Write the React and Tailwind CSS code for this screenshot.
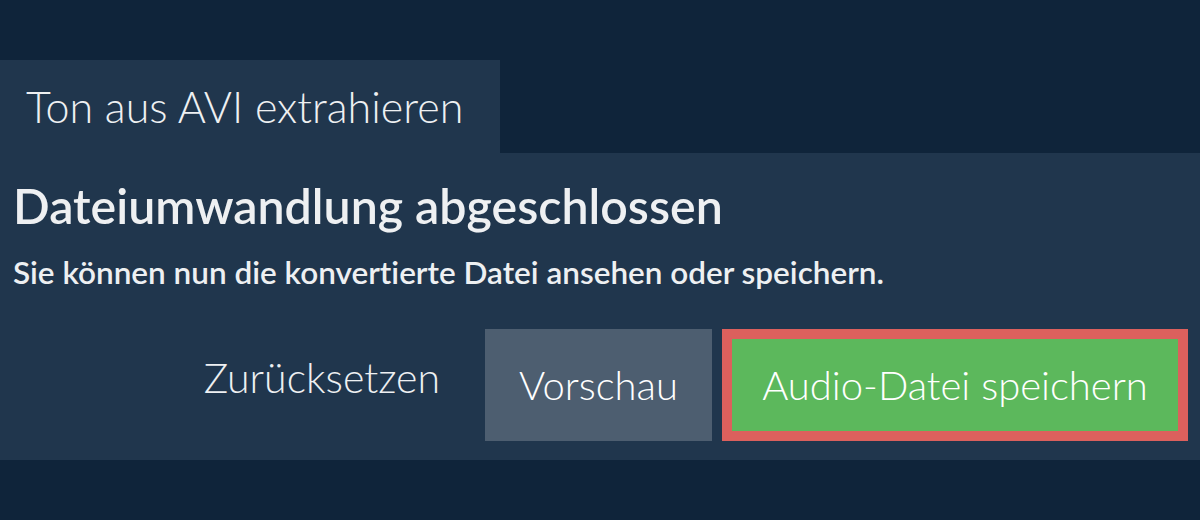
export default function App() {
    return (
        <div className="w-[1200px] h-[520px] bg-[#0f243a] pt-[60px] font-['Lato',sans-serif] text-[#eef0f2] overflow-hidden [font-variant-ligatures:none]">
            <div className="w-[500px] h-[93px] bg-[#20364d] pl-[26px] flex items-center">
                <span className="text-[43px] font-light leading-none">Ton aus AVI extrahieren</span>
            </div>
            <div className="h-[307px] bg-[#20364d] pl-[13px] pr-[12px] pt-[22px]">
                <h1 className="text-[48.3px] font-semibold leading-[60px]">Dateiumwandlung abgeschlossen</h1>
                <p className="text-[31.5px] font-semibold mt-[19px] leading-[36px]">
                    Sie können nun die konvertierte Datei ansehen oder speichern.
                </p>
                <div className="flex justify-end items-center mt-[39px] gap-[10px]">
                    <button className="text-[41px] font-light pr-[35px] pb-[14px] h-[112px] text-[#eef0f2]">Zurücksetzen</button>
                    <button className="text-[40px] font-light bg-[#4d5e70] w-[227px] h-[112px] text-white">Vorschau</button>
                    <button className="text-[40px] font-light bg-[#5cb85c] border-[10px] border-[#dc605d] w-[466px] h-[112px] text-white">
                        Audio-Datei speichern
                    </button>
                </div>
            </div>
        </div>
    );
}
